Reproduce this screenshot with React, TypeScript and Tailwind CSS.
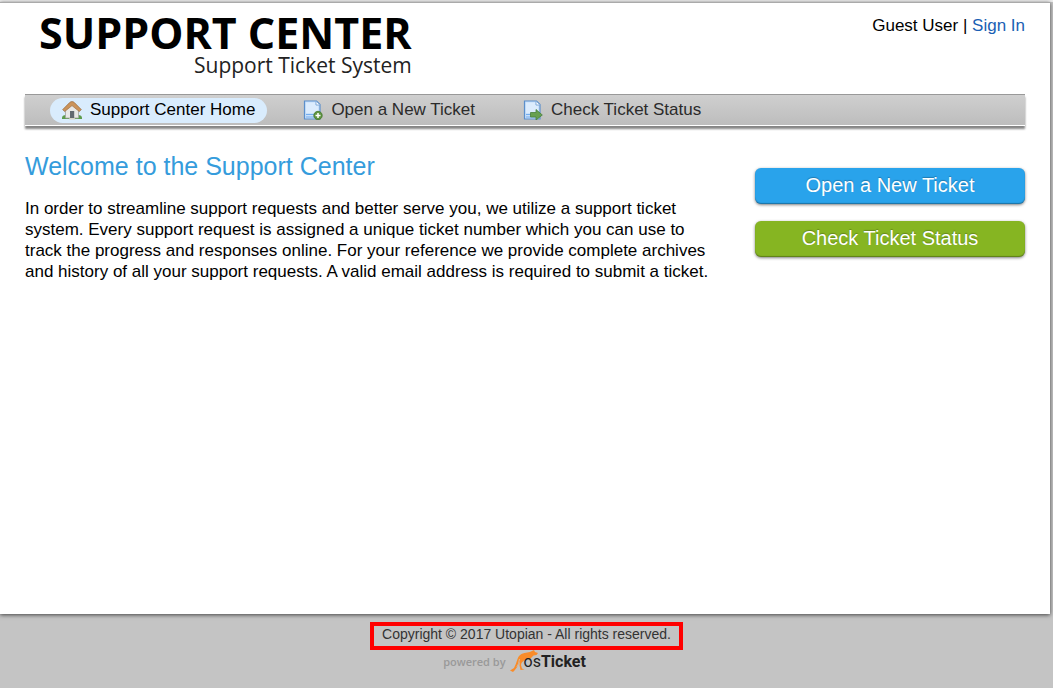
import type { ReactNode } from 'react';

interface NavItem {
  label: string;
  icon: ReactNode;
  active?: boolean;
}

const HomeIcon = () => (
  <svg width="20" height="20" viewBox="0 0 20 20" aria-hidden="true">
    <path d="M0 18q0-3 4-3h12q4 0 4 3v1H0z" fill="#5d9c4d" />
    <path d="M3.5 9.5 10 4l6.5 5.5V18h-13z" fill="#e9e8e6" stroke="#a3a3a0" strokeWidth=".8" />
    <path d="M8 11h4.2v7H8z" fill="#636970" />
    <path d="M7.5 18h5.2l.6 1.5H7z" fill="#d8d2c4" />
    <path d="M.7 9.6 7.6 2.6Q8.6 1.6 10 1.6t2.4 1l6.9 7-1.9 2L10 5.6l-7.4 6z" fill="#cb935a" stroke="#996b40" strokeWidth=".7" />
  </svg>
);

const Page = () => (
  <>
    <path d="M1.5 1h12L17 4.5V19H1.5z" fill="#c9e1fa" stroke="#5c8fcb" strokeWidth="1.2" />
    <path d="M3 2.5h9.5v3H15V13H3z" fill="#dcecfd" />
    <path d="M13 1.5V5h3.8" fill="#fff" stroke="#83abd8" />
    <path d="M3 14.5h13M3 17h13" stroke="#74aced" strokeWidth="1.2" />
  </>
);

const NewIcon = () => (
  <svg width="20" height="20" viewBox="0 0 20 20" aria-hidden="true">
    <Page />
    <circle cx="15" cy="15.5" r="4.2" fill="#5f9440" stroke="#44772c" strokeWidth=".8" />
    <path d="M15 13v5M12.5 15.5h5" stroke="#fff" strokeWidth="1.5" />
  </svg>
);

const StatusIcon = () => (
  <svg width="20" height="20" viewBox="0 0 20 20" aria-hidden="true">
    <Page />
    <path d="M7.5 12.5h5.5v-3l6.3 5.5-6.3 5v-3H7.5z" fill="#67a050" stroke="#46803a" strokeWidth=".8" />
  </svg>
);

const Kangaroo = () => (
  <svg width="34" height="24" viewBox="0 0 34 24" className="-mr-5 shrink-0" aria-hidden="true">
    <path
      d="M0 20.5 4 18q2-4 3.5-9 1.5-5 7-6 6-.5 9.500-3l1 2 3 1-1.500 2-3 .5-3.500 3.500-4 .5q-3 1-4.500 3.500l-.5 2 1 3.500 2.500 1-4 .4-1-4.400.5-4-2.500 5-3 4-1.500 1.500z"
      fill="#f98c2a"
    />
    <path d="M9.500 9q-.5 5-2.700 8" fill="none" stroke="#c4c4c4" strokeWidth=".8" />
  </svg>
);

const navItems: NavItem[] = [
  { label: 'Support Center Home', icon: <HomeIcon />, active: true },
  { label: 'Open a New Ticket', icon: <NewIcon /> },
  { label: 'Check Ticket Status', icon: <StatusIcon /> },
];

const Header = () => (
  <header className="flex items-start justify-between pt-2.5">
    <a href="#" className="ml-3.5 flex flex-col items-end font-['Open_Sans',sans-serif] text-black">
      <span className="text-[43px] leading-10 font-bold">SUPPORT CENTER</span>
      <span className="text-[21px] leading-6 text-[#222]">Support Ticket System</span>
    </a>
    <p className="pt-0.5 leading-[21px]">
      Guest User |{' '}
      <a href="#" className="text-[#1a5fb4]">
        Sign In
      </a>
    </p>
  </header>
);

const Nav = () => (
  <nav className="mt-[17px] flex h-8 items-center gap-6 border-t border-b border-t-[#999] border-b-white bg-linear-to-b from-[#cfcfcf] to-[#bdbdbd] pl-[25px] shadow-[0_3px_2px_#858585]">
    {navItems.map((item) => (
      <a
        key={item.label}
        href="#"
        className={`flex h-[25px] items-center gap-2 rounded-full px-3 ${
          item.active ? 'bg-[#d9ecfd] text-black' : 'text-[#2b2b2b]'
        }`}
      >
        {item.icon}
        {item.label}
      </a>
    ))}
  </nav>
);

const actionClass =
  'h-9 rounded-md pb-0.5 text-[20px] text-white shadow-[0_1px_3px_rgba(0,0,0,0.5),inset_0_-1px_1px_rgba(0,0,0,0.3)] [text-shadow:0_-1px_1px_rgba(0,0,0,0.25)]';

const App = () => (
  <div className="flex min-h-screen flex-col border-t-2 border-[#eee] bg-[#c4c4c4] font-['Liberation_Sans',Arial,sans-serif] text-[17px] text-black">
    <div className="mr-[3px] flex-1 border-t border-[#aaa] bg-white px-[25px] shadow-[0_1px_4px_#444]">
      <Header />
      <Nav />
      <main className="mt-6 flex items-start gap-10">
        <div className="flex-1">
          <h1 className="text-[25px] leading-8 text-[#359cdc]">Welcome to the Support Center</h1>
          <p className="mt-4 leading-[21px]">
            In order to streamline support requests and better serve you, we utilize a support ticket system. Every
            support request is assigned a unique ticket number which you can use to track the progress and responses
            online. For your reference we provide complete archives and history of all your support requests. A valid
            email address is required to submit a ticket.
          </p>
        </div>
        <div className="mt-[18px] flex w-[270px] flex-col gap-[17px]">
          <button type="button" className={`bg-[#29a3eb] ${actionClass}`}>
            Open a New Ticket
          </button>
          <button type="button" className={`bg-[#86b522] ${actionClass}`}>
            Check Ticket Status
          </button>
        </div>
      </main>
    </div>
    <footer className="flex flex-col items-center pt-2 pb-3 text-[14px] text-[#333]">
      <p className="z-10 border-4 border-[#f00] px-2 pb-1 leading-4">Copyright © 2017 Utopian - All rights reserved.</p>
      <a href="#" className="-mt-0.5 mr-6 flex h-7 items-center font-['Open_Sans',sans-serif]">
        <span className="mr-1 text-[11px] font-semibold text-[#999]">powered by</span>
        <Kangaroo />
        <span className="font-[Roboto,sans-serif] text-[16px] text-[#222]">
          os<b className="font-bold">Ticket</b>
        </span>
      </a>
    </footer>
  </div>
);

export default App;
